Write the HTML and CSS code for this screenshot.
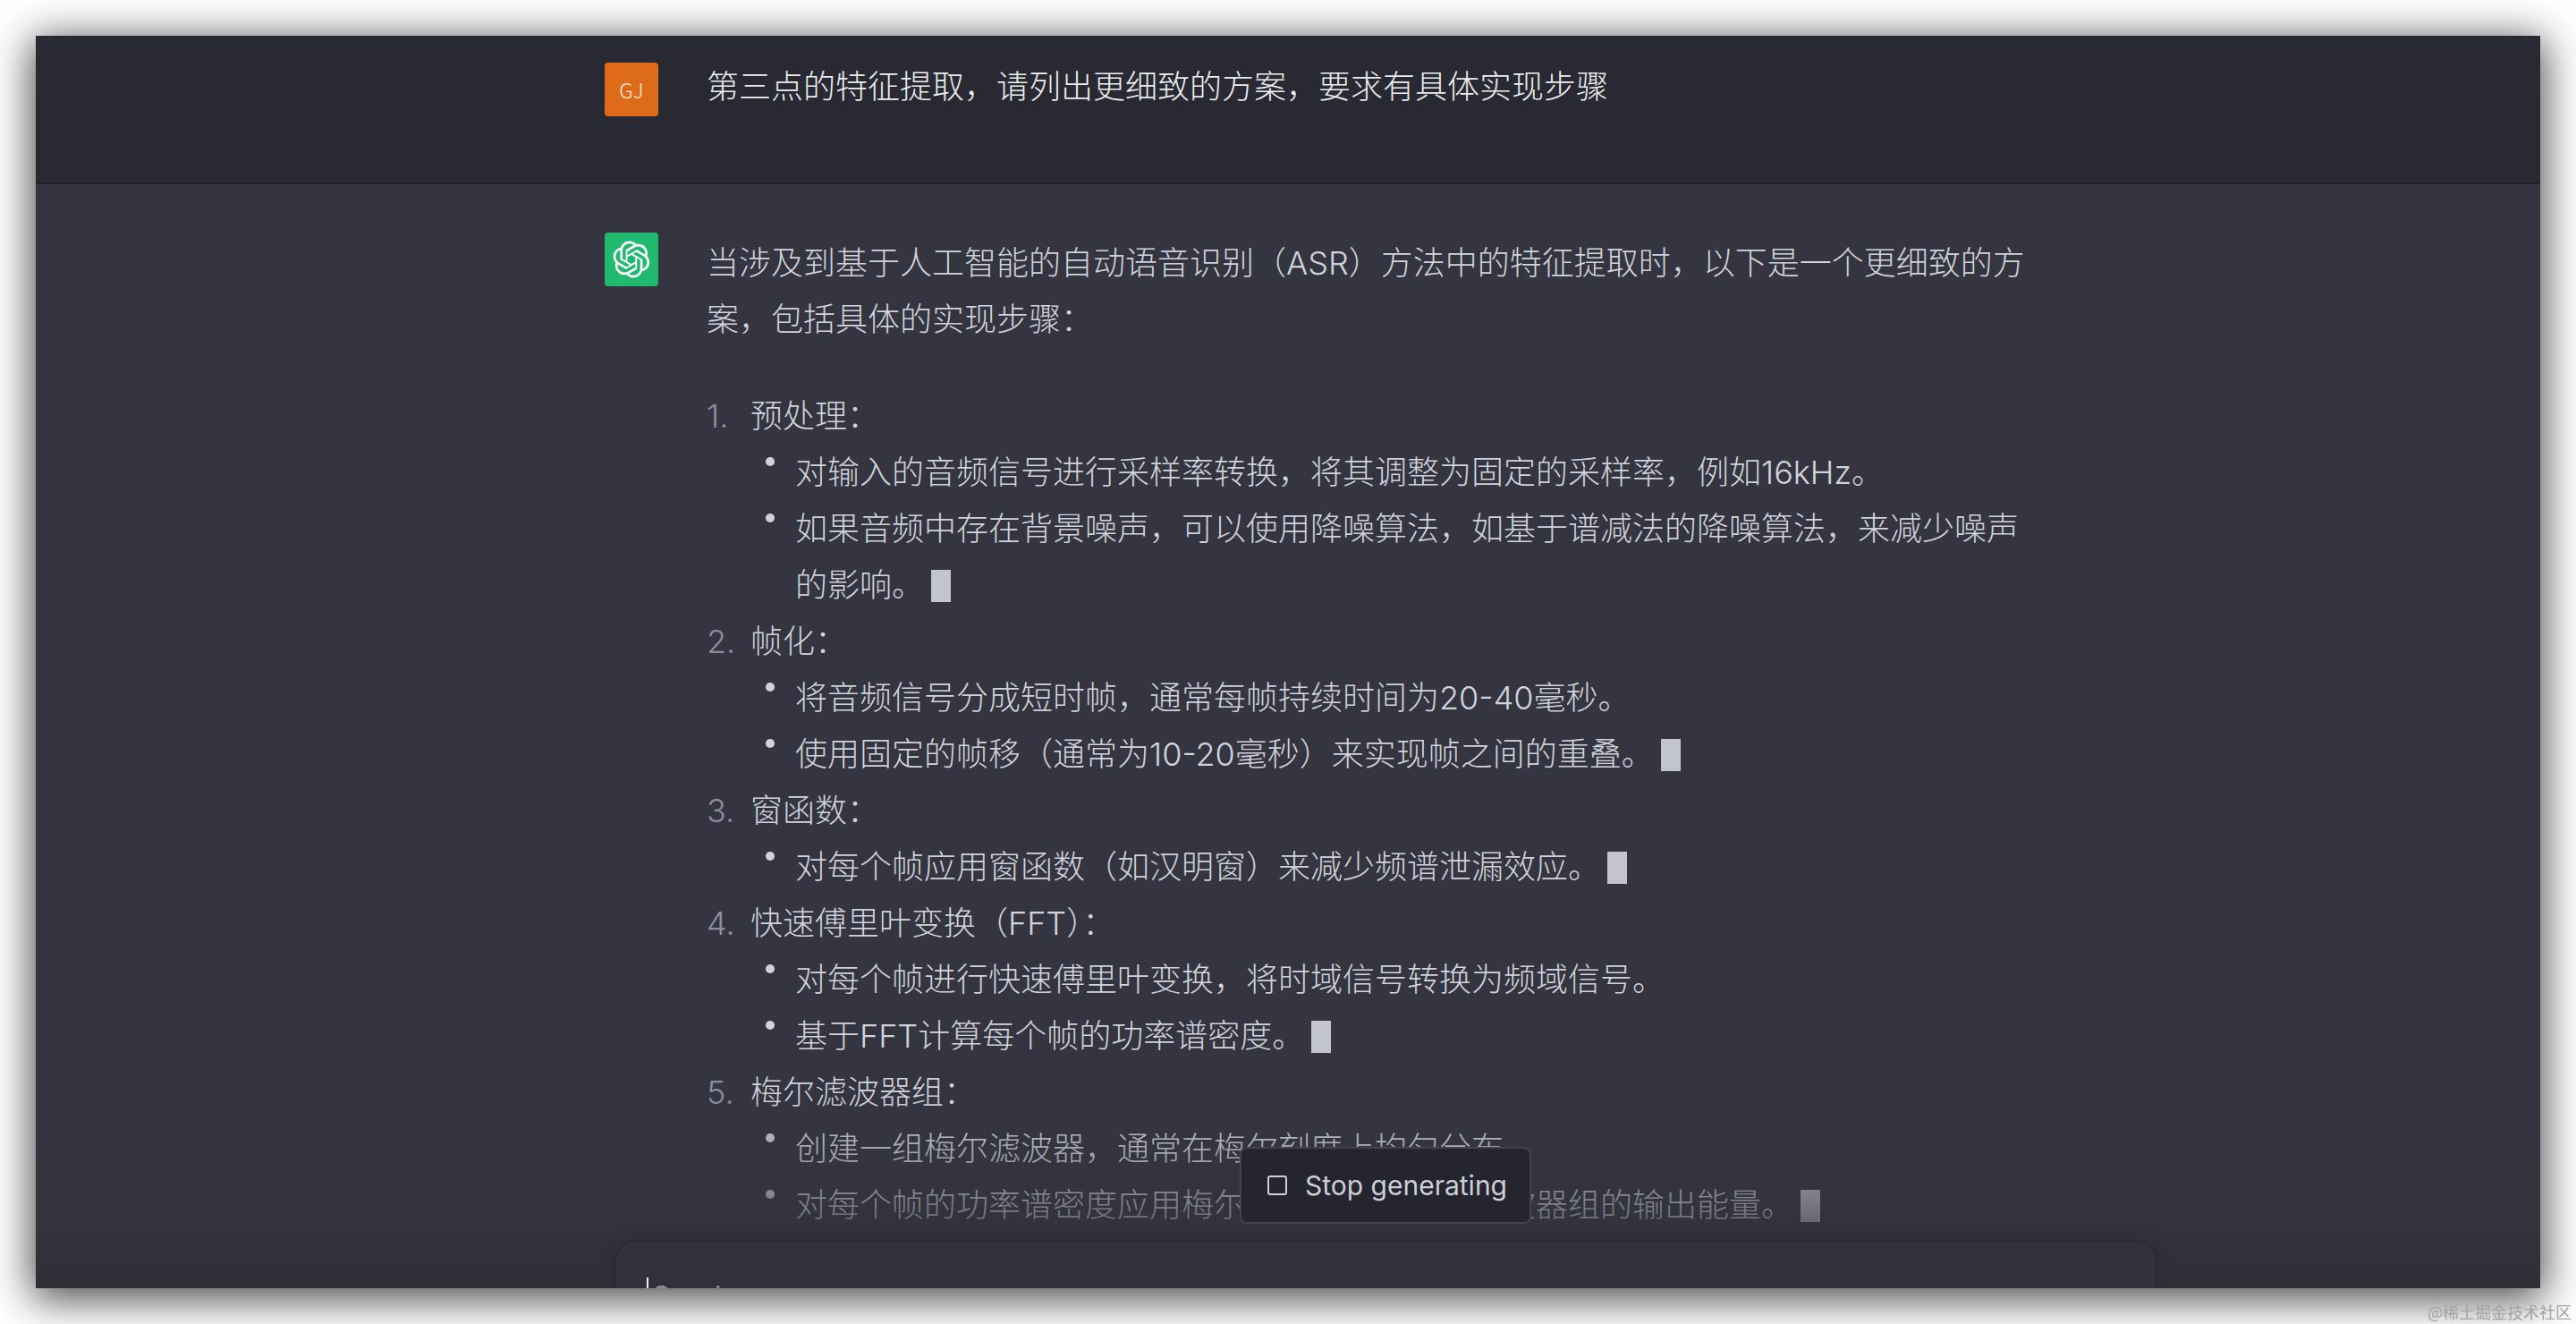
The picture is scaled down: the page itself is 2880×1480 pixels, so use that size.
FILE: index.html
```html
<!DOCTYPE html>
<html lang="zh">
<head>
<meta charset="utf-8">
<title>ChatGPT</title>
<link rel="stylesheet" href="styles.css">
</head>
<body>
<main class="window">
  <section class="row row-user">
    <div class="avatar avatar-user">GJ</div>
    <div class="user-text">第三点的特征提取，请列出更细致的方案，要求有具体实现步骤</div>
  </section>
  <section class="row row-ai">
    <div class="avatar avatar-ai">
      <svg viewBox="0 0 41 41" width="42" height="42" fill="#fff"><path d="M37.5324 16.8707C37.9808 15.5241 38.1363 14.0974 37.9886 12.6859C37.8409 11.2744 37.3934 9.91076 36.676 8.68622C35.6126 6.83404 33.9882 5.3676 32.0373 4.4985C30.0864 3.62941 27.9098 3.40259 25.8215 3.85078C24.8796 2.7893 23.7219 1.94125 22.4257 1.36341C21.1295 0.785575 19.7249 0.491269 18.3058 0.500197C16.1708 0.495044 14.0893 1.16803 12.3614 2.42214C10.6335 3.67624 9.34853 5.44666 8.6917 7.47815C7.30085 7.76286 5.98686 8.3414 4.8377 9.17505C3.68854 10.0087 2.73073 11.0782 2.02839 12.312C0.956464 14.1591 0.498905 16.2988 0.721698 18.4228C0.944492 20.5467 1.83612 22.5449 3.268 24.1293C2.81966 25.4759 2.66413 26.9026 2.81182 28.3141C2.95951 29.7256 3.40701 31.0892 4.12437 32.3138C5.18791 34.1659 6.8123 35.6322 8.76321 36.5013C10.7141 37.3704 12.8907 37.5973 14.9789 37.1492C15.9208 38.2107 17.0786 39.0587 18.3747 39.6366C19.6709 40.2144 21.0755 40.5087 22.4946 40.4998C24.6307 40.5054 26.7133 39.8321 28.4418 38.5772C30.1704 37.3223 31.4556 35.5506 32.1119 33.5179C33.5027 33.2332 34.8167 32.6547 35.9659 31.821C37.115 30.9874 38.0728 29.9178 38.7752 28.684C39.8458 26.8371 40.3023 24.6979 40.0789 22.5748C39.8556 20.4517 38.9639 18.4544 37.5324 16.8707ZM22.4978 37.8849C20.7443 37.8874 19.0459 37.2733 17.6994 36.1501C17.7601 36.117 17.8666 36.0586 17.936 36.0161L25.9004 31.4156C26.1003 31.3019 26.2663 31.137 26.3813 30.9378C26.4964 30.7386 26.5563 30.5124 26.5549 30.2825V19.0542L29.9213 20.998C29.9389 21.0068 29.9541 21.0198 29.9656 21.0359C29.977 21.052 29.9842 21.0707 29.9867 21.0902V30.3889C29.9842 32.375 29.1946 34.2791 27.7909 35.6841C26.3872 37.0892 24.4838 37.8806 22.4978 37.8849ZM6.39227 31.0064C5.51397 29.4888 5.19742 27.7107 5.49804 25.9832C5.55718 26.0187 5.66048 26.0818 5.73461 26.1244L13.699 30.7248C13.8975 30.8408 14.1233 30.902 14.3532 30.902C14.583 30.902 14.8088 30.8408 15.0073 30.7248L24.731 25.1103V28.9979C24.7321 29.0177 24.7283 29.0376 24.7199 29.0556C24.7115 29.0736 24.6988 29.0893 24.6829 29.1012L16.6317 33.7497C14.9096 34.7416 12.8643 35.0097 10.9447 34.4954C9.02506 33.9811 7.38785 32.7263 6.39227 31.0064ZM4.29707 13.6194C5.17156 12.0998 6.55279 10.9364 8.19885 10.3327C8.19885 10.4013 8.19491 10.5228 8.19491 10.6071V19.808C8.19351 20.0378 8.25334 20.2638 8.36823 20.4629C8.48312 20.6619 8.64893 20.8267 8.84863 20.9404L18.5723 26.5542L15.206 28.4979C15.1894 28.5089 15.1703 28.5155 15.1505 28.5173C15.1307 28.5191 15.1107 28.516 15.0924 28.5082L7.04046 23.8557C5.32135 22.8601 4.06716 21.2235 3.55289 19.3046C3.03862 17.3858 3.30624 15.3413 4.29707 13.6194ZM31.955 20.0556L22.2312 14.4411L25.5976 12.4981C25.6142 12.4872 25.6333 12.4805 25.6531 12.4787C25.6729 12.4769 25.6928 12.4801 25.7111 12.4879L33.7631 17.1364C34.9967 17.849 36.0017 18.8982 36.6606 20.1613C37.3194 21.4244 37.6047 22.849 37.4832 24.2684C37.3617 25.6878 36.8382 27.0432 35.9743 28.1759C35.1103 29.3086 33.9415 30.1717 32.6047 30.6641C32.6047 30.5947 32.6047 30.4733 32.6047 30.3889V21.188C32.6066 20.9586 32.5474 20.7328 32.4332 20.5338C32.319 20.3348 32.154 20.1698 31.955 20.0556ZM35.3055 15.0128C35.2464 14.9765 35.1431 14.9142 35.069 14.8717L27.1045 10.2712C26.906 10.1554 26.6803 10.0943 26.4504 10.0943C26.2206 10.0943 25.9948 10.1554 25.7963 10.2712L16.0726 15.8858V11.9982C16.0715 11.9783 16.0753 11.9585 16.0837 11.9405C16.0921 11.9225 16.1048 11.9068 16.1207 11.8949L24.1719 7.25025C25.4053 6.53903 26.8158 6.19376 28.2383 6.25482C29.6608 6.31589 31.0364 6.78077 32.2044 7.59508C33.3723 8.40939 34.2842 9.53945 34.8334 10.8531C35.3826 12.1667 35.5464 13.6095 35.3055 15.0128ZM14.2424 21.9419L10.8752 19.9981C10.8576 19.9893 10.8423 19.9763 10.8309 19.9602C10.8195 19.9441 10.8122 19.9254 10.8098 19.9058V10.6071C10.8107 9.18295 11.2173 7.78848 11.9819 6.58696C12.7466 5.38544 13.8377 4.42659 15.1275 3.82264C16.4173 3.21869 17.8524 2.99464 19.2649 3.1767C20.6775 3.35876 22.0089 3.93941 23.1034 4.85067C23.0427 4.88379 22.937 4.94215 22.8668 4.98473L14.9024 9.58517C14.7025 9.69878 14.5366 9.86356 14.4215 10.0626C14.3065 10.2616 14.2466 10.4877 14.2479 10.7175L14.2424 21.9419ZM16.071 17.9991L20.4018 15.4978L24.7325 17.9975V22.9985L20.4018 25.4983L16.071 22.9985V17.9991Z"/></svg>
    </div>
    <article class="answer">
      <p class="intro">当涉及到基于人工智能的自动语音识别（ASR）方法中的特征提取时，以下是一个更细致的方案，包括具体的实现步骤：</p>
      <ol class="steps">
        <li class="step"><span class="num">1.</span><div class="step-body">预处理：
          <ul class="subs">
            <li class="sub"><span class="dot"></span><span>对输入的音频信号进行采样率转换，将其调整为固定的采样率，例如16kHz。</span></li>
            <li class="sub"><span class="dot"></span><span>如果音频中存在背景噪声，可以使用降噪算法，如基于谱减法的降噪算法，来减少噪声的影响。<i class="cursor"></i></span></li>
          </ul></div></li>
        <li class="step"><span class="num">2.</span><div class="step-body">帧化：
          <ul class="subs">
            <li class="sub"><span class="dot"></span><span>将音频信号分成短时帧，通常每帧持续时间为20-40毫秒。</span></li>
            <li class="sub"><span class="dot"></span><span>使用固定的帧移（通常为10-20毫秒）来实现帧之间的重叠。<i class="cursor"></i></span></li>
          </ul></div></li>
        <li class="step"><span class="num">3.</span><div class="step-body">窗函数：
          <ul class="subs">
            <li class="sub"><span class="dot"></span><span>对每个帧应用窗函数（如汉明窗）来减少频谱泄漏效应。<i class="cursor"></i></span></li>
          </ul></div></li>
        <li class="step"><span class="num">4.</span><div class="step-body">快速傅里叶变换（FFT）：
          <ul class="subs">
            <li class="sub"><span class="dot"></span><span>对每个帧进行快速傅里叶变换，将时域信号转换为频域信号。</span></li>
            <li class="sub"><span class="dot"></span><span>基于FFT计算每个帧的功率谱密度。<i class="cursor"></i></span></li>
          </ul></div></li>
        <li class="step"><span class="num">5.</span><div class="step-body">梅尔滤波器组：
          <ul class="subs">
            <li class="sub"><span class="dot"></span><span>创建一组梅尔滤波器，通常在梅尔刻度上均匀分布。</span></li>
            <li class="sub"><span class="dot"></span><span>对每个帧的功率谱密度应用梅尔滤波器组，得到滤波器组的输出能量。<i class="cursor"></i></span></li>
          </ul></div></li>
      </ol>
    </article>
  </section>
  <div class="fade"></div>
  <button class="stop" type="button">
    <svg class="stop-icon" viewBox="0 0 22 22" width="22" height="22" fill="none" stroke="currentColor" stroke-width="2"><rect x="1" y="1" width="20" height="20" rx="2"/></svg>
    Stop generating
  </button>
  <div class="composer"><span class="caret"></span><span class="placeholder">Send a message.</span></div>
</main>
<div class="watermark">@稀土掘金技术社区</div>
</body>
</html>
```
FILE: styles.css
```css
* { box-sizing: border-box; }
html, body { margin: 0; height: 100%; background: #fff; }
body { padding: 40px; overflow: hidden; position: relative; font-family: Inter, "Noto Sans CJK SC", sans-serif; }
.window {
  position: relative;
  height: 1400px;
  overflow: hidden;
  background: #343540;
  box-shadow: 0 8px 44px 4px rgba(0, 0, 0, .72);
}
.row { display: flex; padding-left: 636px; }
.row-user {
  height: 166px;
  background: #282932;
  border-bottom: 2px solid #1f2027;
  padding-top: 30px;
}
.row-ai { padding-top: 54px; }
.avatar {
  flex: none;
  width: 60px;
  height: 60px;
  border-radius: 4px;
  display: flex;
  align-items: center;
  justify-content: center;
  margin-right: 54px;
}
.avatar-user { background: #dd6b1a; color: #ffeeda; font: 300 23px "Noto Sans CJK SC", sans-serif; }
.avatar-ai { background: #20b96f; }
.user-text { font-size: 36px; font-weight: 300; line-height: 63px; color: #eceded; margin-top: -4px; }
.answer { width: 1474px; padding-top: 3px; font-size: 36px; font-weight: 300; line-height: 63px; color: #d1d3dc; }
.intro { margin: 0 0 45px; }
.steps, .subs { list-style: none; margin: 0; padding: 0; }
.step { display: flex; }
.num { flex: none; width: 49px; color: #8e8ea0; }
.step-body { flex: 1; min-width: 0; }
.sub { display: flex; }
.dot { flex: none; width: 10px; height: 10px; margin: 14px 23px 0 17px; border-radius: 50%; background: #d1d3dc; }
.cursor {
  display: inline-block;
  width: 22px;
  height: 36px;
  margin-left: 8px;
  vertical-align: -6px;
  background: #c2c4d0;
}
.fade {
  position: absolute;
  left: 0;
  right: 0;
  bottom: 0;
  height: 220px;
  background: linear-gradient(to bottom, rgba(52,53,64,0) 0%, rgba(50,51,60,.5) 55%, #2e2f37 100%);
}
.stop {
  position: absolute;
  left: 1346px;
  top: 1242px;
  width: 326px;
  height: 86px;
  display: flex;
  align-items: center;
  gap: 20px;
  padding: 0 0 0 29px;
  border: 2px solid #41434f;
  border-radius: 8px;
  background: #24252e;
  color: #cdcfd9;
  font: 400 30px Inter, sans-serif;
}
.stop-icon { flex: none; }
.composer {
  position: absolute;
  left: 647px;
  top: 1346px;
  width: 1725px;
  height: 120px;
  display: flex;
  align-items: flex-start;
  gap: 4px;
  padding: 40px 0 0 34px;
  border: 2px solid #292a32;
  border-radius: 24px;
  background: #30313c;
  box-shadow: 0 0 20px rgba(0, 0, 0, .1);
}
.caret { flex: none; width: 2px; height: 30px; background: #f0f0f4; }
.placeholder { margin-top: 2px; font-size: 32px; line-height: 40px; color: #8e8ea0; }
.watermark {
  position: absolute;
  right: 5px;
  bottom: 1px;
  font-family: "Noto Sans CJK SC", serif;
  font-size: 18px;
  line-height: 26px;
  color: #a3a3a3;
}
```
